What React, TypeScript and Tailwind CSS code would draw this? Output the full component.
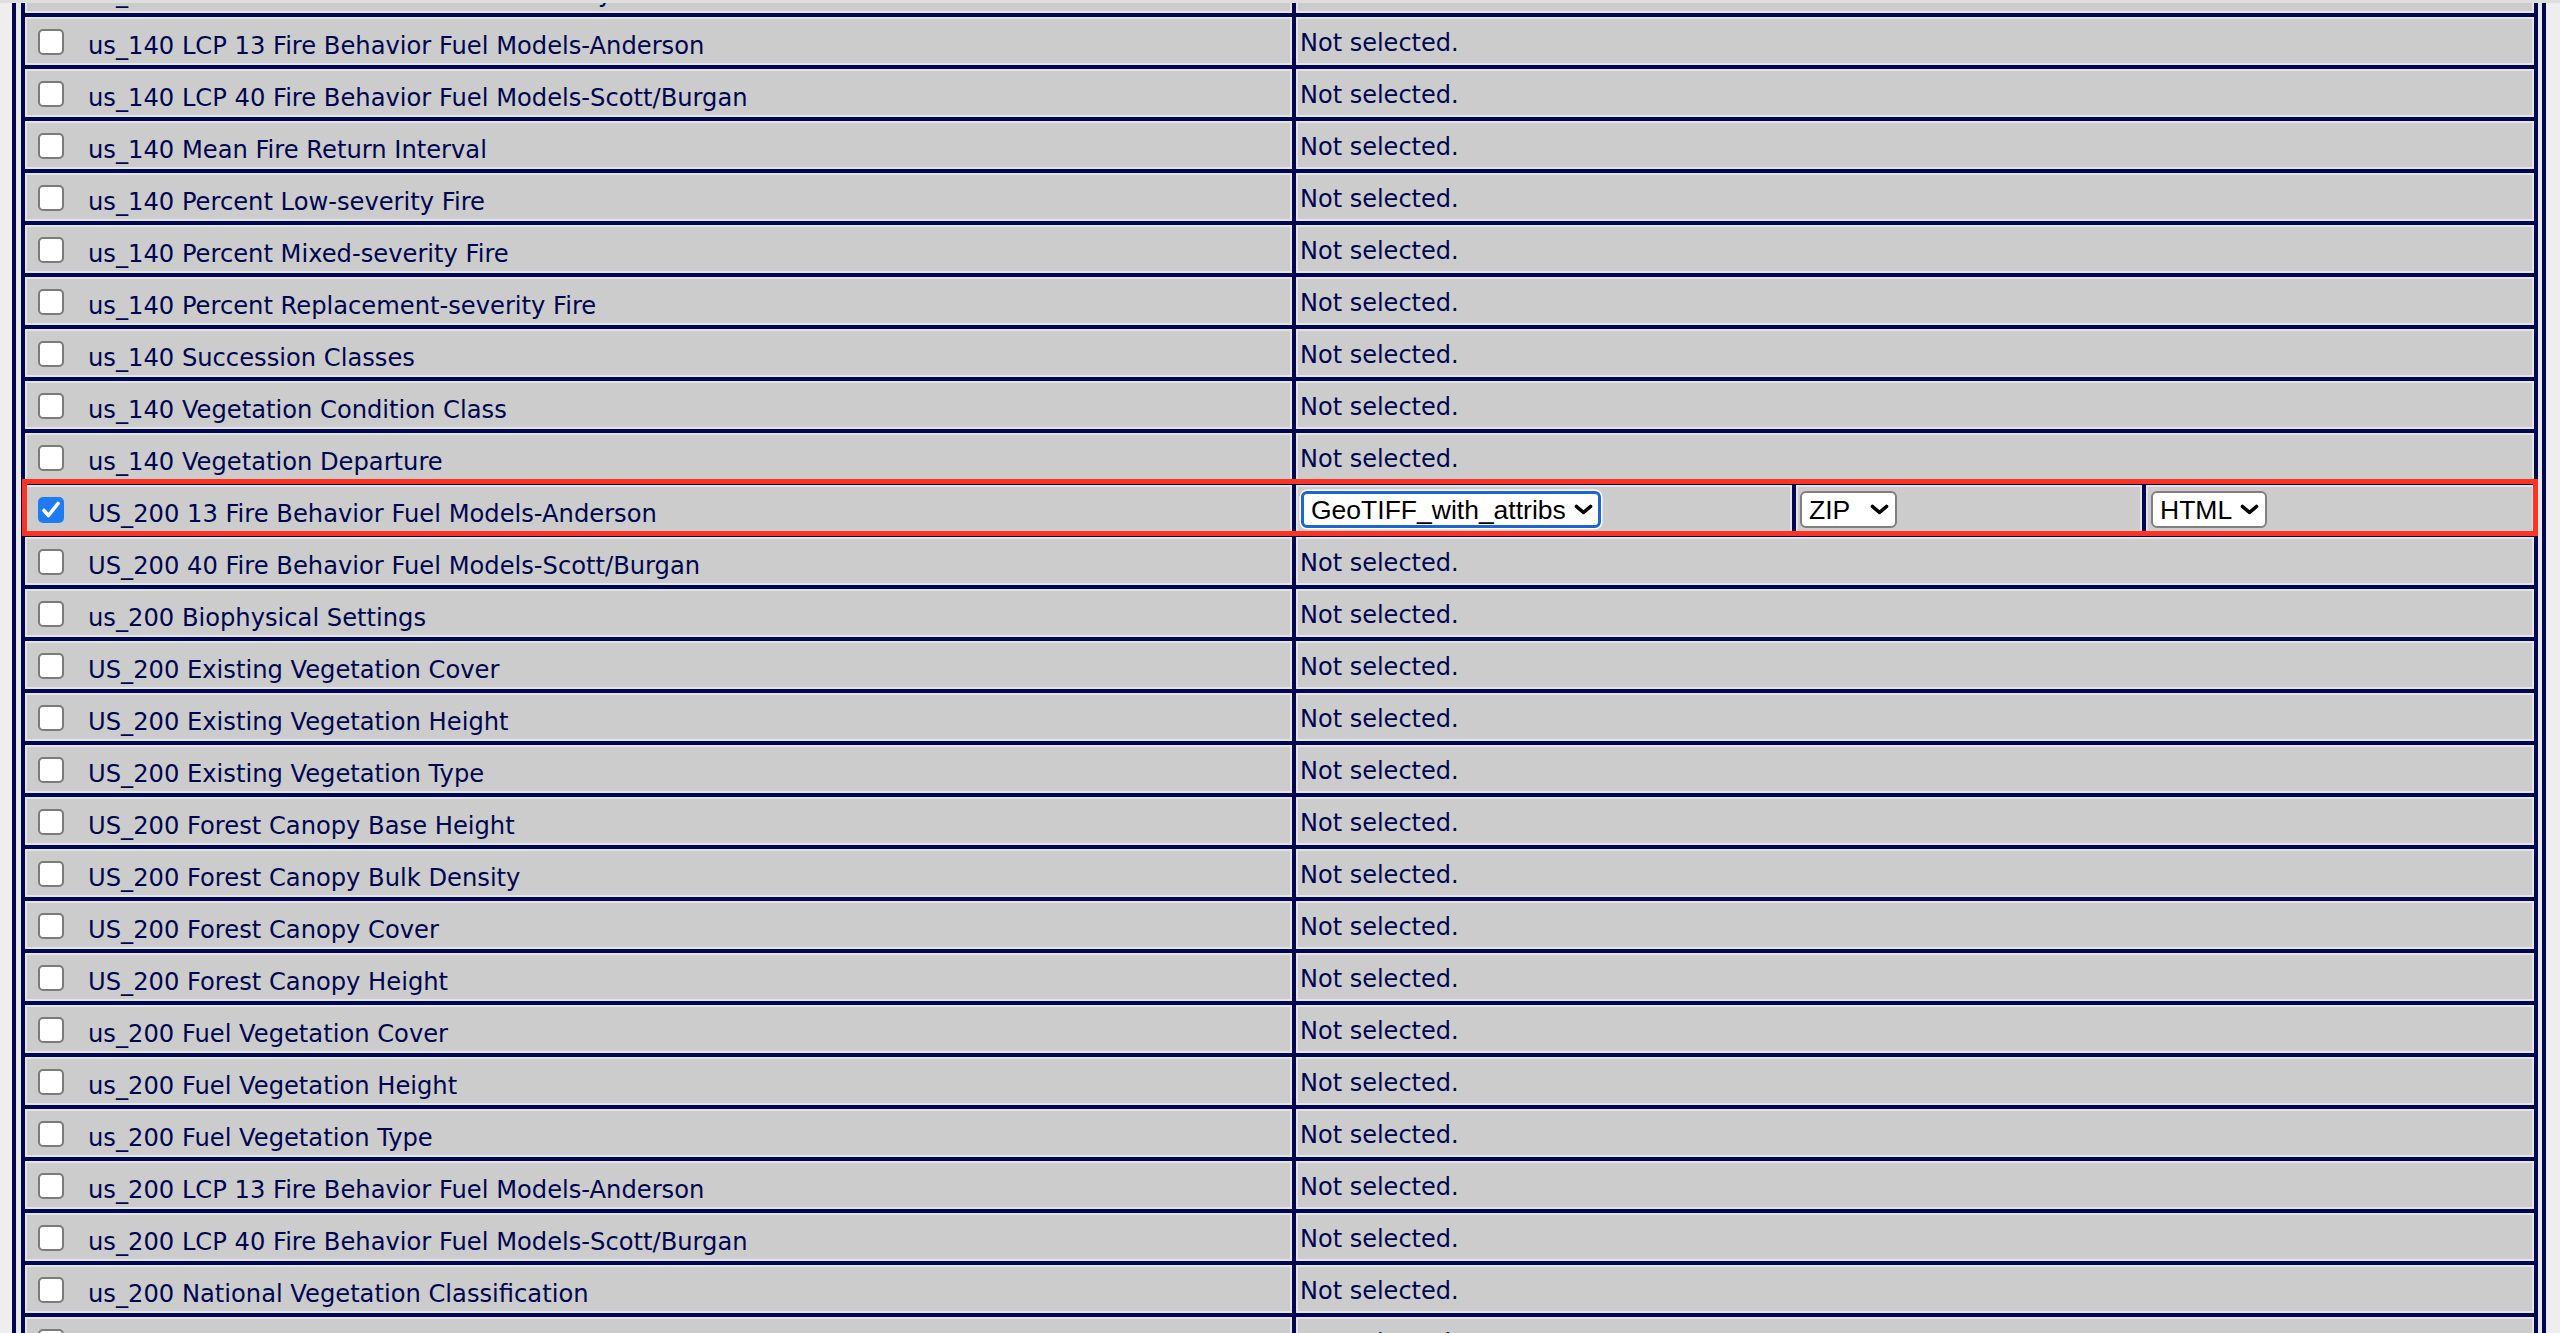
import React from 'react';

const layers = [
  'us_140 Fuel Characteristic Classification System Fuelbeds',
  'us_140 LCP 13 Fire Behavior Fuel Models-Anderson',
  'us_140 LCP 40 Fire Behavior Fuel Models-Scott/Burgan',
  'us_140 Mean Fire Return Interval',
  'us_140 Percent Low-severity Fire',
  'us_140 Percent Mixed-severity Fire',
  'us_140 Percent Replacement-severity Fire',
  'us_140 Succession Classes',
  'us_140 Vegetation Condition Class',
  'us_140 Vegetation Departure',
  'US_200 13 Fire Behavior Fuel Models-Anderson',
  'US_200 40 Fire Behavior Fuel Models-Scott/Burgan',
  'us_200 Biophysical Settings',
  'US_200 Existing Vegetation Cover',
  'US_200 Existing Vegetation Height',
  'US_200 Existing Vegetation Type',
  'US_200 Forest Canopy Base Height',
  'US_200 Forest Canopy Bulk Density',
  'US_200 Forest Canopy Cover',
  'US_200 Forest Canopy Height',
  'us_200 Fuel Vegetation Cover',
  'us_200 Fuel Vegetation Height',
  'us_200 Fuel Vegetation Type',
  'us_200 LCP 13 Fire Behavior Fuel Models-Anderson',
  'us_200 LCP 40 Fire Behavior Fuel Models-Scott/Burgan',
  'us_200 National Vegetation Classification',
  'us_200 Percent Low-severity Fire',
];

const Checkbox: React.FC<{ checked?: boolean }> = ({ checked }) =>
  checked ? (
    <span className="mt-[10px] flex h-[26px] w-[26px] shrink-0 items-center justify-center rounded-[5px] bg-[#1f7bf4]">
      <svg width="26" height="26" viewBox="0 0 26 26">
        <path d="M6 13.5 L10.5 18.5 L20 6.5" fill="none" stroke="#ffffff" strokeWidth="3.6" strokeLinecap="round" strokeLinejoin="round" />
      </svg>
    </span>
  ) : (
    <span className="mt-[10px] h-[26px] w-[26px] shrink-0 rounded-[5px] border-2 border-[#7b7b7b] bg-white" />
  );

const Select: React.FC<{ value: string; className: string }> = ({ value, className }) => (
  <div className="relative w-fit">
    <select
      defaultValue={value}
      className={`block h-[37px] appearance-none rounded-[6px] bg-white pl-[7px] font-['Liberation_Sans',Arial,sans-serif] text-[26.5px] leading-[30px] text-black outline-none ${className}`}
    >
      <option>{value}</option>
    </select>
    {/* chevron */}
    <svg className="pointer-events-none absolute right-[8px] top-[13px]" width="19" height="11" viewBox="0 0 19 11">
      <path d="M2.5 2.5 L9.5 8.5 L16.5 2.5" fill="none" stroke="#000000" strokeWidth="3.6" strokeLinecap="round" strokeLinejoin="round" />
    </svg>
  </div>
);

const Row: React.FC<{ name: string; selected?: boolean }> = ({ name, selected }) => (
  <div className="relative flex h-[48px] shrink-0 gap-[4px]">
    <div className="flex w-[1267px] shrink-0 border-2 border-[#e4e4e4] bg-[#cccccc] pl-[11px]">
      <Checkbox checked={selected} />
      <span className="ml-[24px] whitespace-nowrap pt-[13px] text-[24.2px] leading-[28px]">{name}</span>
    </div>
    {selected ? (
      <>
        <div className="w-[496px] shrink-0 border-2 border-[#e4e4e4] bg-[#cccccc] pl-[3px] pt-[4px]">
          <Select value="GeoTIFF_with_attribs" className="w-[300px] border-[3px] border-[#1b66d4] shadow-[0_0_0_1.5px_#ffffff]" />
        </div>
        <div className="w-[346px] shrink-0 border-2 border-[#e4e4e4] bg-[#cccccc] pl-[2px] pt-[4px]">
          <Select value="ZIP" className="w-[97px] border-2 border-[#7f7f7f]" />
        </div>
        <div className="flex-1 border-2 border-[#e4e4e4] bg-[#cccccc] pl-[3px] pt-[4px]">
          <Select value="HTML" className="w-[116px] border-2 border-[#7f7f7f]" />
        </div>
        {/* red highlight box drawn over the chosen row */}
        <div className="pointer-events-none absolute -bottom-[3px] -left-[3px] -right-[4px] -top-[6px] border-[5px] border-[#ff3324]" />
      </>
    ) : (
      <div className="flex-1 border-2 border-[#e4e4e4] bg-[#cccccc] pl-[2px] pt-[10px] leading-[28px]">Not selected.</div>
    )}
  </div>
);

export default function App() {
  return (
    <div className="relative h-[1333px] overflow-hidden bg-[#eeeeee] font-['DejaVu_Sans',Verdana,sans-serif] text-[24px] text-[#000650]">
      <div className="-mt-[39px] ml-[12px] w-[2534px] border-x-4 border-[#000650] bg-[#e8e8e8] pl-[5px] pr-[4px]">
        <div className="flex flex-col gap-[4px] bg-[#000650] p-[4px]">
          {layers.map((name, idx) => (
            <Row key={idx} name={name} selected={idx === 10} />
          ))}
        </div>
      </div>
      {/* thin light strip of the browser frame over the top edge */}
      <div className="pointer-events-none absolute inset-x-0 top-0 h-[3px] bg-[#dedede]" />
    </div>
  );
}
